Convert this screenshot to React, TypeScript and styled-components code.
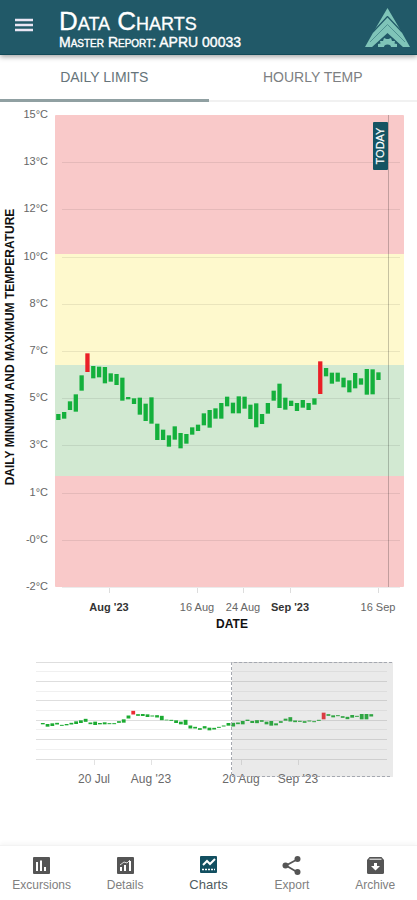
import React from "react";
import styled, { createGlobalStyle } from "styled-components";

const GlobalStyle = createGlobalStyle`
  * { box-sizing: border-box; }
  body {
    margin: 0;
    background: #ffffff;
    font-family: "Liberation Sans", Arial, sans-serif;
  }
`;

const Screen = styled.div`
  display: flex;
  flex-direction: column;
  min-height: 100vh;
`;

const Header = styled.header`
  display: flex;
  align-items: center;
  height: 55px;
  padding: 0 6px 0 14px;
  background: #215968;
  border-bottom: 1px solid #124a58;
  box-shadow: 0 2px 5px rgba(0, 0, 0, 0.35);
  z-index: 1;
`;

const MenuButton = styled.button`
  display: flex;
  width: 20px;
  height: 24px;
  margin: 0 25px 5px 0;
  padding: 0;
  align-items: center;
  border: 0;
  background: none;
  cursor: pointer;
`;

const Titles = styled.div`
  flex: 1;
  padding-top: 4px;
  color: #ffffff;
  font-variant: small-caps;
`;

const Title = styled.h1`
  margin: 0;
  font-size: 26px;
  line-height: 26px;
  font-weight: 400;
  -webkit-text-stroke: 0.3px #ffffff;
`;

const Subtitle = styled.p`
  margin: 0;
  font-size: 14px;
  line-height: 16px;
  -webkit-text-stroke: 0.4px #ffffff;
`;

const Tabs = styled.div`
  display: grid;
  grid-template-columns: 1fr 1fr;
`;

const Tab = styled.button<{ $active?: boolean }>`
  height: 47px;
  padding: 0 0 1px;
  border: 0;
  border-bottom: ${(p) => (p.$active ? "3px solid #90a0a2" : "2px solid #f1f1f1")};
  background: #ffffff;
  color: ${(p) => (p.$active ? "#66747a" : "#7d7f82")};
  font: 400 14px "Liberation Sans", Arial, sans-serif;
  text-transform: uppercase;
  cursor: pointer;
`;

const Main = styled.main`
  flex: 1;
`;

const Chart = styled.svg`
  display: block;
  width: 100%;
  height: auto;
  font-family: "Liberation Sans", Arial, sans-serif;
`;

const BottomNav = styled.nav`
  display: grid;
  grid-template-columns: repeat(5, 1fr);
  height: 55px;
  border-top: 1px solid #f3f3f3;
  box-shadow: 0 -2px 4px rgba(0, 0, 0, 0.04);
`;

const NavItem = styled.a<{ $active?: boolean }>`
  display: flex;
  flex-direction: column;
  align-items: center;
  padding-top: ${(p) => (p.$active ? "9px" : "10px")};
  gap: ${(p) => (p.$active ? "2px" : "1px")};
  color: ${(p) => (p.$active ? "#4f5b60" : "#808080")};
  font-size: ${(p) => (p.$active ? "13px" : "12px")};
  line-height: 16px;
  text-decoration: none;
`;

/* [top, bottom] of each day's range, in thirds of a chart unit below BAR_ORIGIN */
const DAILY: number[][] = [
  [222, 240], [216, 236], [184, 210], [163, 215], [106, 152], [40, 96], [78, 115], [80, 112],
  [81, 130], [100, 125], [102, 135], [113, 182], [171, 178], [175, 192], [173, 224], [191, 243],
  [172, 251], [251, 300], [269, 300], [286, 320], [259, 299], [279, 325], [282, 311], [262, 284],
  [254, 273], [220, 256], [210, 263], [205, 236], [189, 236], [170, 199], [188, 220], [169, 220],
  [170, 206], [194, 237], [190, 262], [222, 252], [189, 221], [152, 182], [131, 204], [173, 209],
  [182, 198], [189, 213], [180, 203], [189, 210], [175, 194], [64, 162], [84, 109], [98, 131],
  [98, 125], [113, 142], [121, 157], [99, 145], [115, 134], [87, 164], [88, 163], [97, 120],
];
const DAILY_ALERTS = [5, 45];
const BAR_ORIGIN = 238;

/* [centre, height] of each day in the overview, in thirds of a chart unit */
const OVERVIEW: number[][] = [
  [221, 4], [226, 8], [224, 8], [221, 5], [226, 3], [224, 4], [221, 5], [218, 8], [215, 8], [211, 9],
  [220, 5], [220, 10], [221, 4], [220, 6], [221, 3], [221, 3], [216, 5], [213, 10], [201, 9], [188, 11],
  [195, 5], [195, 6], [197, 8], [198, 3], [199, 7], [204, 13], [210, 2], [211, 3], [215, 8], [219, 8],
  [217, 15], [231, 9], [233, 5], [237, 5], [232, 7], [237, 8], [236, 5], [232, 3], [228, 3], [223, 8],
  [224, 11], [220, 5], [218, 10], [211, 4], [216, 6], [215, 9], [213, 5], [219, 8], [220, 14], [223, 6],
  [216, 5], [209, 6], [208, 13], [214, 5], [214, 3], [216, 5], [213, 3], [215, 3], [211, 3], [198, 20],
  [195, 5], [199, 6], [197, 3], [201, 5], [204, 7], [199, 8], [199, 3], [200, 16], [200, 16], [196, 7],
];
const OVERVIEW_ALERTS = [19, 59];

const Y_LABELS = ["15", "13", "12", "10", "8", "7", "5", "3", "1", "-0", "-2"];
const X_LABELS = [
  { x: 109, text: "Aug '23", bold: true },
  { x: 197, text: "16 Aug", bold: false },
  { x: 243, text: "24 Aug", bold: false },
  { x: 290, text: "Sep '23", bold: true },
  { x: 378, text: "16 Sep", bold: false },
];
const OVERVIEW_LABELS = [
  { x: 94, text: "20 Jul" },
  { x: 151, text: "Aug '23" },
  { x: 241, text: "20 Aug" },
  { x: 298, text: "Sep '23" },
];

const PLOT = { left: 55, right: 404, top: 13, bottom: 485 };
const ROW = (PLOT.bottom - PLOT.top) / 10;

function DailyChart() {
  const width = PLOT.right - PLOT.left;
  return (
    <Chart viewBox="0 0 417 538" role="img" aria-label="Daily minimum and maximum temperature">
      <rect x={PLOT.left} y={13} width={width} height={472} rx={1} fill="#f9c9c9" />
      <rect x={PLOT.left} y={152} width={width} height={111} fill="#fef9cd" />
      <rect x={PLOT.left} y={263} width={width} height={111} fill="#d2e9d2" />
      {Y_LABELS.map((label, i) => {
        const y = Math.round(PLOT.top + i * ROW);
        return (
          <g key={label}>
            {i > 0 && <rect x={62} y={y} width={338} height={1} fill="#000000" opacity={0.08} />}
            <text x={48} y={y + 3} fontSize={11} textAnchor="end" fill="#666666">{label}°C</text>
          </g>
        );
      })}
      <rect x={388} y={PLOT.top} width={1} height={472} fill="#000000" opacity={0.22} />
      {DAILY.map(([top, bottom], i) => (
        <rect
          key={i}
          x={56.2 + i * 5.82}
          y={BAR_ORIGIN + top / 3}
          width={4.3}
          height={(bottom - top) / 3}
          fill={DAILY_ALERTS.includes(i) ? "#ea2027" : "#14b03c"}
        />
      ))}
      <rect x={373} y={20} width={15} height={48} rx={1} fill="#155463" />
      <text transform="translate(384 44) rotate(-90)" fontSize={11} textAnchor="middle" fill="#ffffff" stroke="#ffffff" strokeWidth={0.2}>TODAY</text>
      {X_LABELS.map(({ x, text, bold }) => (
        <g key={text}>
          <rect x={x} y={486} width={1} height={5} fill="#dddddd" />
          <text x={x} y={509} fontSize={11} textAnchor="middle" fontWeight={bold ? 700 : 400} fill={bold ? "#333333" : "#666666"}>{text}</text>
        </g>
      ))}
      <text x={232} y={526} fontSize={12} fontWeight={700} textAnchor="middle" fill="#111111">DATE</text>
      <text transform="translate(14 245) rotate(-90)" fontSize={12} fontWeight={700} textAnchor="middle" fill="#111111">
        DAILY MINIMUM AND MAXIMUM TEMPERATURE
      </text>
    </Chart>
  );
}

function OverviewChart() {
  return (
    <Chart viewBox="0 0 417 160" role="img" aria-label="Temperature overview">
      {Y_LABELS.map((label, i) => (
        <rect key={label} x={36} y={Math.round(21.5 + i * 9.7)} width={351} height={1} fill={i % 2 ? "#f0f0f0" : "#dedede"} />
      ))}
      {OVERVIEW.map(([centre, height], i) => (
        <rect
          key={i}
          x={40.9 + i * 4.76}
          y={10 + (centre - height / 2) / 3}
          width={3.8}
          height={height / 3}
          fill={OVERVIEW_ALERTS.includes(i) ? "#ec2c34" : "#1cab32"}
        />
      ))}
      {OVERVIEW_LABELS.map(({ x, text }) => (
        <g key={text}>
          <rect x={x} y={120} width={1} height={5} fill="#e2e2e2" />
          <text x={x} y={143} fontSize={12} textAnchor="middle" fill="#6a6a6a">{text}</text>
        </g>
      ))}
      <rect x={232} y={22} width={161} height={115} fill="#888888" opacity={0.18} />
      <path d="M392 22.500H231.500V136.500H392" fill="none" stroke="#a5a8b0" strokeDasharray="3 2" />
    </Chart>
  );
}

function Logo() {
  return (
    <svg width="47" height="42" viewBox="0 0 47 42" fill="#7fc4b8" aria-label="Logo" role="img">
      <path d="M23.500 2 L37 25 L46 41 H39 L23.500 27 L8 41 H1 L10 25 Z" />
      <path d="M23.500 10.500 L38 26 M23.500 10.500 L9 26" stroke="#215968" strokeWidth="1.200" fill="none" />
      <path d="M23.500 18.500 L41 36 M23.500 18.500 L6 36" stroke="#4a8c8c" strokeWidth="0.900" fill="none" />
      <path d="M14 41 V38 L16.500 37.500 L16 35 L19 35 L20 32 L22.500 33 H24.500 L27 32 L28 35 L31 35 L30.500 37.500 L33 38 V41 H27 A3.500 2.500 0 0 0 20 41 Z" />
    </svg>
  );
}

const NAV = [
  {
    label: "Excursions",
    icon: (
      <>
        <rect x="1" y="1" width="17" height="17" rx="1" fill="#555555" />
        <path d="M5 6v9M9 4.500v10.500M13 11v4" stroke="#ffffff" strokeWidth="2" />
      </>
    ),
  },
  {
    label: "Details",
    icon: (
      <>
        <rect x="1" y="1" width="17" height="17" rx="1" fill="#555555" />
        <path d="M5 11v4M9 9v6M14 5v10" stroke="#ffffff" strokeWidth="2" />
        <path d="M4 9l4-3 3 1 3-3" stroke="#ffffff" strokeWidth="0.800" fill="none" />
      </>
    ),
  },
  {
    label: "Charts",
    icon: (
      <>
        <rect x="1" y="1" width="17" height="17" rx="1" fill="#124f60" />
        <path d="M4 10l4-4 3 3 5-5" stroke="#ffffff" strokeWidth="2" fill="none" />
        <path d="M3 14.500h13" stroke="#ffffff" strokeWidth="1.500" strokeDasharray="2 1" />
      </>
    ),
  },
  {
    label: "Export",
    icon: (
      <>
        <path d="M15 3.500L4 9.500L15 16" stroke="#555555" strokeWidth="1.800" fill="none" />
        <circle cx="15.500" cy="3" r="3" fill="#555555" />
        <circle cx="3.500" cy="9.500" r="3" fill="#555555" />
        <circle cx="15.500" cy="16" r="3" fill="#555555" />
      </>
    ),
  },
  {
    label: "Archive",
    icon: (
      <>
        <path d="M1 4L3.500 1H15.500L18 4V16.500Q18 18 16.500 18H2.500Q1 18 1 16.500Z" fill="#555555" />
        <path d="M3.500 3.200H15.500" stroke="#ffffff" strokeWidth="1" />
        <path d="M8 7h3v3h3l-4.500 4.500L5 10h3z" fill="#ffffff" />
      </>
    ),
  },
];

export default function App() {
  return (
    <Screen>
      <GlobalStyle />
      <Header>
        <MenuButton aria-label="Open menu">
          <svg width="20" height="14" viewBox="0 0 20 14">
            <path d="M1 2h18M1 7h18M1 12h18" stroke="#eae6f4" strokeWidth="2.400" />
          </svg>
        </MenuButton>
        <Titles>
          <Title>Data Charts</Title>
          <Subtitle>Master Report: APRU 00033</Subtitle>
        </Titles>
        <Logo />
      </Header>
      <Tabs role="tablist">
        <Tab role="tab" aria-selected $active>Daily Limits</Tab>
        <Tab role="tab" aria-selected={false}>Hourly Temp</Tab>
      </Tabs>
      <Main>
        <DailyChart />
        <OverviewChart />
      </Main>
      <BottomNav>
        {NAV.map(({ label, icon }) => (
          <NavItem key={label} href={"#" + label.toLowerCase()} $active={label === "Charts"}>
            <svg width="19" height="20" viewBox="0 0 19 20" aria-hidden="true">{icon}</svg>
            {label}
          </NavItem>
        ))}
      </BottomNav>
    </Screen>
  );
}
